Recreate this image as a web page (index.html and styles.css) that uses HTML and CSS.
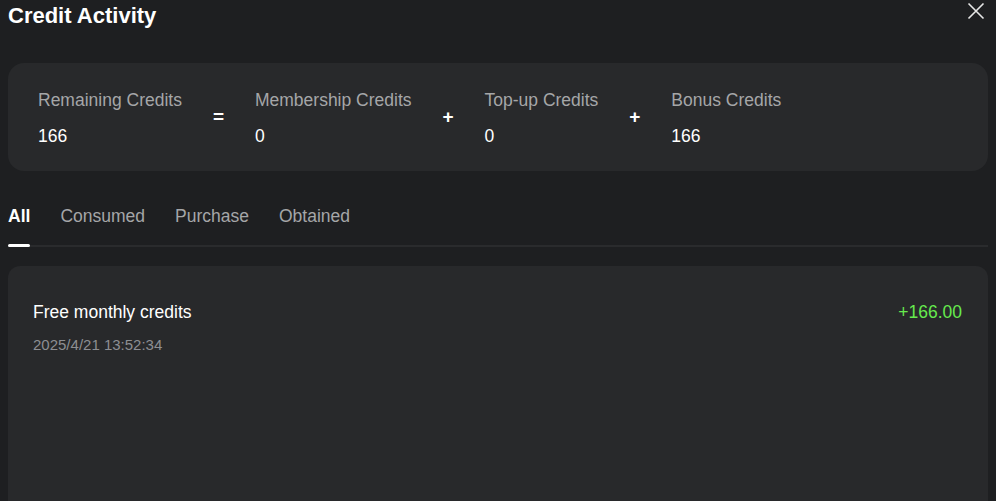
FILE: index.html
```html
<!DOCTYPE html>
<html lang="en">
<head>
<meta charset="utf-8">
<title>Credit Activity</title>
<link rel="stylesheet" href="styles.css">
</head>
<body>
<div class="dialog">
  <header class="head">
    <h1 class="title">Credit Activity</h1>
    <button class="close" aria-label="Close">
      <svg width="18" height="18" viewBox="0 0 18 18"><path d="M1.5 1.5 L16.5 16.5 M16.5 1.5 L1.5 16.5" stroke="#e6e6e6" stroke-width="1.6" fill="none"/></svg>
    </button>
  </header>

  <section class="summary">
    <div class="stat">
      <div class="label">Remaining Credits</div>
      <div class="value">166</div>
    </div>
    <div class="op">=</div>
    <div class="stat">
      <div class="label">Membership Credits</div>
      <div class="value">0</div>
    </div>
    <div class="op">+</div>
    <div class="stat">
      <div class="label">Top-up Credits</div>
      <div class="value">0</div>
    </div>
    <div class="op">+</div>
    <div class="stat">
      <div class="label">Bonus Credits</div>
      <div class="value">166</div>
    </div>
  </section>

  <nav class="tabs">
    <div class="tab active">All</div>
    <div class="tab">Consumed</div>
    <div class="tab">Purchase</div>
    <div class="tab">Obtained</div>
  </nav>

  <section class="list">
    <div class="row">
      <div class="row-main">
        <div class="row-title">Free monthly credits</div>
        <div class="row-date">2025/4/21 13:52:34</div>
      </div>
      <div class="amount">+166.00</div>
    </div>
  </section>
</div>
</body>
</html>
```
FILE: styles.css
```css
* { box-sizing: border-box; }
html, body {
  margin: 0;
  padding: 0;
  height: 100%;
  overflow: hidden;
  background: #1e1f21;
}
body {
  font-family: "Liberation Sans", Arial, sans-serif;
  color: #ffffff;
}
.dialog {
  padding: 0 8px;
  height: 100%;
  overflow: hidden;
}
.head {
  display: flex;
  justify-content: space-between;
  align-items: flex-start;
  height: 63px;
}
.title {
  margin: 4px 0 0 0;
  font-size: 22px;
  line-height: 24px;
  font-weight: 700;
  color: #ffffff;
}
.close {
  background: none;
  border: 0;
  padding: 0;
  margin: 2px 3px 0 0;
  width: 18px;
  height: 18px;
  cursor: pointer;
}
.close svg { display: block; }

.summary {
  display: flex;
  align-items: center;
  gap: 30.5px;
  background: #28292b;
  border-radius: 16px;
  height: 108px;
  padding: 0 30px;
}
.stat {
  display: flex;
  flex-direction: column;
  gap: 16px;
  padding-top: 1px;
}
.label {
  font-size: 17.5px;
  line-height: 20px;
  color: #a5a6a8;
}
.value {
  font-size: 17.5px;
  line-height: 20px;
  color: #ffffff;
}
.op {
  font-size: 19px;
  font-weight: 700;
  color: #ffffff;
  width: 12px;
  text-align: center;
}

.tabs {
  display: flex;
  gap: 30px;
  margin-top: 35px;
  border-bottom: 2px solid #2a2b2d;
}
.tab {
  font-size: 17.5px;
  line-height: 20px;
  color: #a5a6a8;
  padding-bottom: 19px;
  position: relative;
}
.tab.active {
  color: #ffffff;
  font-weight: 700;
}
.tab.active::after {
  content: "";
  position: absolute;
  left: 0;
  right: 0;
  bottom: -2px;
  height: 3px;
  border-radius: 2px;
  background: #ffffff;
}

.list {
  margin-top: 19px;
  background: #28292b;
  border-radius: 12px;
  height: 300px;
  padding: 36px 26px 0 25px;
}
.row {
  display: flex;
  justify-content: space-between;
  align-items: flex-start;
}
.row-main {
  display: flex;
  flex-direction: column;
  gap: 14px;
}
.row-title {
  font-size: 17.5px;
  line-height: 20px;
  color: #ffffff;
}
.row-date {
  font-size: 15px;
  line-height: 17px;
  color: #8d8e92;
}
.amount {
  font-size: 17.5px;
  line-height: 20px;
  color: #66ea4e;
}
```
